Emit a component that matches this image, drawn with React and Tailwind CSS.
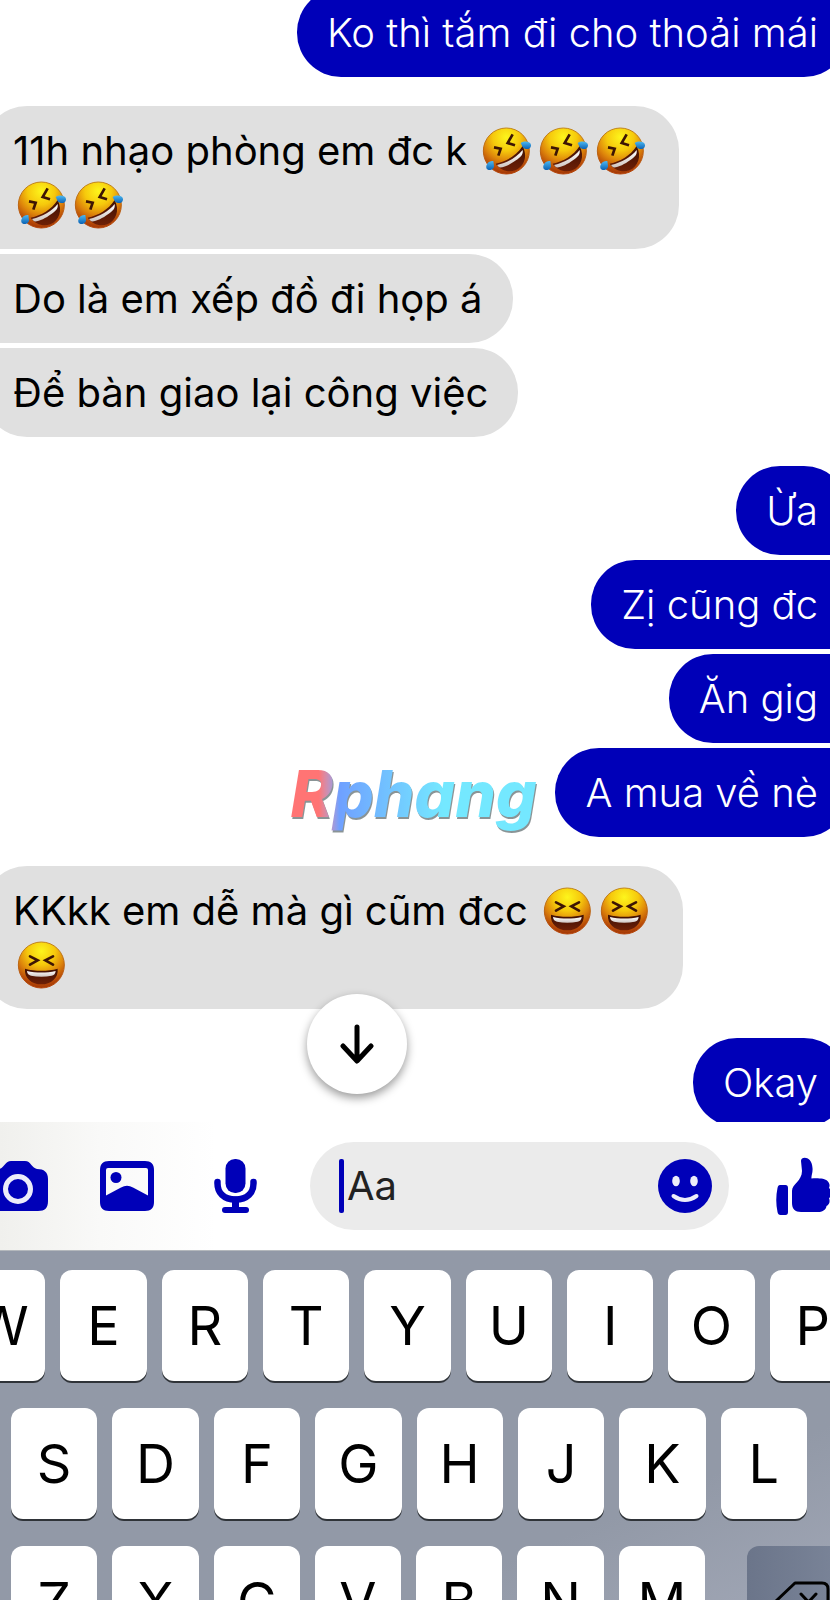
import { useState } from 'react'

const TOP_ROW = ['W', 'E', 'R', 'T', 'Y', 'U', 'I', 'O', 'P']
const HOME_ROW = ['S', 'D', 'F', 'G', 'H', 'J', 'K', 'L']
const BOTTOM_ROW = ['Z', 'X', 'C', 'V', 'B', 'N', 'M']

const ROFL = '🤣'
const LAUGH = '😆'

const THREAD = [
  { from: 'me', bubbles: [['Ko thì tắm đi cho thoải mái']] },
  {
    from: 'them',
    bubbles: [
      ['11h nhạo phòng em đc k ' + ROFL + ROFL + ROFL, ROFL + ROFL],
      ['Do là em xếp đồ đi họp á'],
      ['Để bàn giao lại công việc'],
    ],
  },
  { from: 'me', bubbles: [['Ừa'], ['Zị cũng đc'], ['Ăn gig'], ['A mua về nè']] },
  { from: 'them', bubbles: [['KKkk em dễ mà gì cũm đcc ' + LAUGH + LAUGH, LAUGH]] },
  { from: 'me', bubbles: [['Okay']] },
]

// Gradients shared by every emoji on the page
function EmojiDefs() {
  return (
    <svg className="absolute w-0 h-0" aria-hidden="true">
      <defs>
        <radialGradient id="face" cx="0.5" cy="0.2" r="0.82">
          <stop offset="0" stopColor="#fdf51c" />
          <stop offset="0.36" stopColor="#f6c90c" />
          <stop offset="0.62" stopColor="#de860b" />
          <stop offset="0.85" stopColor="#b84a08" />
          <stop offset="1" stopColor="#9c3206" />
        </radialGradient>
        <linearGradient id="rim" x1="0" y1="0" x2="0" y2="1">
          <stop offset="0" stopColor="#c1851a" />
          <stop offset="1" stopColor="#b5440a" />
        </linearGradient>
        <linearGradient id="mouth" x1="0" y1="0" x2="0" y2="1">
          <stop offset="0" stopColor="#3d0f04" />
          <stop offset="1" stopColor="#6e2006" />
        </linearGradient>
        <linearGradient id="teeth" x1="0" y1="0" x2="0" y2="1">
          <stop offset="0" stopColor="#ffffff" />
          <stop offset="1" stopColor="#cfc6c2" />
        </linearGradient>
        <linearGradient id="tear" x1="0" y1="0" x2="0" y2="1">
          <stop offset="0" stopColor="#4db9f2" />
          <stop offset="1" stopColor="#0b62b4" />
        </linearGradient>
      </defs>
    </svg>
  )
}

function RoflEmoji() {
  return (
    <svg viewBox="12 16 147 150" role="img" aria-label="rolling on the floor laughing" className="inline-block w-[49px] h-[50px] mx-1 -mt-1.5">
      <circle cx="85" cy="91" r="69" fill="url(#face)" stroke="url(#rim)" strokeWidth="3" />
      <path d="M48 80 L68 84 L61 105" fill="none" stroke="#3d1504" strokeWidth="8" strokeLinejoin="miter" />
      <path d="M104 41 L89 67 L111 74" fill="none" stroke="#3d1504" strokeWidth="8" strokeLinejoin="miter" />
      <path d="M53 129 C86 122 114 106 134 76 C150 108 138 138 112 149 C90 157 66 148 53 129 Z" fill="url(#mouth)" />
      <path d="M57 133 C90 125 116 110 134 88 C136 101 130 108 114 119 C98 131 76 142 63 140 Z" fill="url(#teeth)" />
      <path d="M128 67 C142 58 160 63 159 75 C158 88 140 88 134 79 Z" fill="url(#tear)" />
      <path d="M46 121 C31 119 21 134 26 144 C32 152 49 147 48 135 Z" fill="url(#tear)" />
    </svg>
  )
}

function LaughEmoji() {
  return (
    <svg viewBox="27 16 147 150" role="img" aria-label="laughing" className="inline-block w-[49px] h-[50px] mx-1 -mt-1.5">
      <circle cx="100" cy="91" r="69" fill="url(#face)" stroke="url(#rim)" strokeWidth="3" />
      <path d="M66 65 L89 77 L66 90" fill="none" stroke="#3d1504" strokeWidth="8" strokeLinecap="round" />
      <path d="M135 65 L112 77 L135 90" fill="none" stroke="#3d1504" strokeWidth="8" strokeLinecap="round" />
      <path d="M51 102 C80 110 120 110 149 102 C152 130 129 149 100 149 C71 149 48 130 51 102 Z" fill="url(#mouth)" />
      <path d="M57 109 C84 115 116 115 143 109 C142 119 137 122 131 123 C112 127 88 127 69 123 C62 121 58 118 57 109 Z" fill="url(#teeth)" />
    </svg>
  )
}

function Line({ text }) {
  return Array.from(text).map((ch, i) => {
    if (ch === ROFL) return <RoflEmoji key={i} />
    if (ch === LAUGH) return <LaughEmoji key={i} />
    return ch
  })
}

function Bubble({ lines, mine, first, last }) {
  const side = mine
    ? `self-end rounded-l-[44px] bg-[#0000b8] text-white font-[350] ${first ? 'rounded-tr-[44px]' : ''} ${last ? 'rounded-br-[44px]' : ''}`
    : `self-start rounded-r-[44px] bg-[#e0e0e0] text-black ${first ? 'rounded-tl-[44px]' : ''} ${last ? 'rounded-bl-[44px]' : ''}`

  return (
    <div className={`px-[30px] pt-[18px] pb-[17px] text-[40px] leading-[54px] whitespace-nowrap ${side}`}>
      {lines.map((line, i) => (
        <p key={i}>
          <Line text={line} />
        </p>
      ))}
    </div>
  )
}

function Watermark() {
  return (
    <div className="absolute left-[35%] top-[756px] drop-shadow-[1px_2px_0px_#8a9496] select-none">
      <span className="block pr-2 text-[64px] leading-[76px] font-extrabold italic text-transparent bg-clip-text bg-linear-to-r from-[#ff7474] from-11% via-[#6fa0ff] via-19% to-[#74e8ff] to-60%">
        Rphang
      </span>
    </div>
  )
}

function ArrowDownIcon() {
  return (
    <svg viewBox="0 0 34 40" className="w-[34px] h-[40px]" fill="none" stroke="currentColor" strokeWidth="5" strokeLinecap="round" strokeLinejoin="round">
      <path d="M17 3 V36 M3 22 L17 37 L31 22" />
    </svg>
  )
}

function CameraIcon() {
  return (
    <svg viewBox="0 0 60 50" className="w-[60px] h-[50px]" fill="currentColor">
      <path d="M23 0 H37 C43 0 43.500 7 49 8 C56 8 60 11 60 18 V40 C60 47 57 50 50 50 H10 C3 50 0 47 0 40 V18 C0 11 4 8 11 8 C16.500 7 17 0 23 0 Z" />
      <circle cx="30" cy="28" r="12.500" fill="none" stroke="#ececfa" strokeWidth="5" />
    </svg>
  )
}

function PhotoIcon() {
  return (
    <svg viewBox="0 0 54 50" className="w-[54px] h-[50px]" fill="currentColor">
      <path fillRule="evenodd" d="M9 0 H45 C51 0 54 3 54 9 V41 C54 47 51 50 45 50 H9 C3 50 0 47 0 41 V9 C0 3 3 0 9 0 Z M8 7 Q6 7 6 9 V34.500 L21 26.500 Q27 23 33 26.500 L48 34.500 V9 Q48 7 46 7 Z" />
      <circle cx="16" cy="16.500" r="5.500" />
    </svg>
  )
}

function MicIcon() {
  return (
    <svg viewBox="0 0 43 54" className="w-[43px] h-[54px]" fill="none" stroke="currentColor" strokeLinecap="round">
      <rect x="11.500" y="0" width="20" height="34" rx="9.500" fill="currentColor" stroke="none" />
      <path d="M3.500 23 C3 34 10 40.500 21.500 40.500 C33 40.500 40 34 39.500 23" strokeWidth="6.500" />
      <path d="M21.500 41 V50" strokeWidth="7" />
      <path d="M11 51 H32" strokeWidth="6" />
    </svg>
  )
}

function SmileIcon() {
  return (
    <svg viewBox="0 0 54 54" className="w-[54px] h-[54px]">
      <circle cx="27" cy="27" r="27" fill="currentColor" />
      <ellipse cx="18" cy="22" rx="3.800" ry="5.200" fill="#ececfa" />
      <ellipse cx="36" cy="22" rx="3.800" ry="5.200" fill="#ececfa" />
      <path d="M15.500 37 Q27 45 38.500 37" fill="none" stroke="#ececfa" strokeWidth="4" strokeLinecap="round" />
    </svg>
  )
}

function ThumbIcon() {
  return (
    <svg viewBox="0 0 60 58" className="w-[60px] h-[58px]" fill="currentColor">
      <path d="M4 28 H9.500 Q12 28 12 31 V55 Q12 58 9.500 58 H4.500 Q2 58 1.500 55 Q-1 43 1.500 31 Q2 28 4 28 Z" />
      <path d="M25 4 C25 -1 36 -1 36.500 11 C37 16 35 19 35.500 21.500 C42 21 49 21.500 51.500 24 C54.500 27 53.500 30 53 31 C57 34 56 39 53 41 C54.500 45 53 48 50.500 49 C50 53 46 55 42 55 H25 C19 55 16 52 16 46 V34 C16 27 26 24 26 14 Z" />
    </svg>
  )
}

function Composer() {
  const [text, setText] = useState('')

  return (
    <div className="flex items-center shrink-0 h-32 bg-linear-to-r from-[#f0f0ed] via-[#f9f9f8] via-12% to-white to-26% text-[#0000b8]">
      <button aria-label="Camera" className="-ml-3 shrink-0">
        <CameraIcon />
      </button>
      <button aria-label="Photo" className="ml-[52px] shrink-0">
        <PhotoIcon />
      </button>
      <button aria-label="Voice message" className="ml-[60px] shrink-0">
        <MicIcon />
      </button>
      <div className="flex items-center flex-1 min-w-0 h-[88px] ml-[53px] pl-[29px] pr-[17px] rounded-full bg-[#ebebeb]">
        <span className="w-[5px] h-[54px] shrink-0 rounded-xs bg-[#0000b8]" />
        <input
          value={text}
          onChange={e => setText(e.target.value)}
          placeholder="Aa"
          aria-label="Message"
          className="flex-1 min-w-0 pl-[3px] text-[40px] leading-[54px] text-[#222222] placeholder-[#222222] bg-transparent outline-none"
        />
        <button aria-label="Emoji" className="shrink-0">
          <SmileIcon />
        </button>
      </div>
      <button aria-label="Like" className="ml-[47px] -mr-[6px] shrink-0">
        <ThumbIcon />
      </button>
    </div>
  )
}

function Key({ label }) {
  return (
    <button className="flex-1 min-w-0 h-[111px] rounded-xl bg-white text-[54px] leading-none text-black shadow-[0_2px_0_#2f3338]">
      {label}
    </button>
  )
}

function Keyboard() {
  return (
    <div className="flex flex-col gap-[27px] shrink-0 h-[350px] pt-[19px] overflow-hidden border-t border-[#b4b8bc] bg-linear-to-br from-[#9299a7] from-75% to-[#a0a6b5]">
      <div className="flex gap-[15px] -ml-[41px] -mr-[26px]">
        {TOP_ROW.map(k => <Key key={k} label={k} />)}
      </div>
      <div className="flex gap-[15px] ml-[11px] mr-[23px]">
        {HOME_ROW.map(k => <Key key={k} label={k} />)}
      </div>
      <div className="flex gap-[42px] ml-[11px] -mr-[27px]">
        <div className="flex flex-1 gap-[15px]">
          {BOTTOM_ROW.map(k => <Key key={k} label={k} />)}
        </div>
        <button
          aria-label="Backspace"
          className="flex items-center justify-center w-[110px] h-[111px] shrink-0 rounded-xl bg-linear-to-r from-[#6b758a] to-[#7d879b] text-black"
        >
          <svg viewBox="0 0 56 42" className="w-[56px] h-[42px]" fill="none" stroke="currentColor" strokeWidth="3" strokeLinecap="round" strokeLinejoin="round">
            <path d="M21 2 H48 Q54 2 54 8 V34 Q54 40 48 40 H21 L2 22 Q1 21 2 20 Z" />
            <path d="M27 13 L42 29 M42 13 L27 29" />
          </svg>
        </button>
      </div>
    </div>
  )
}

export default function App() {
  return (
    <div className="flex flex-col h-screen overflow-hidden bg-white font-['Inter','Noto_Sans',sans-serif]">
      <EmojiDefs />

      {/* Thread */}
      <div className="relative flex-1 min-h-0 overflow-hidden">
        <div className="flex flex-col gap-[29px] -mt-3 -ml-[17px] -mr-[18px]">
          {THREAD.map((group, g) => (
            <div key={g} className="flex flex-col gap-[5px]">
              {group.bubbles.map((lines, i) => (
                <Bubble
                  key={i}
                  lines={lines}
                  mine={group.from === 'me'}
                  first={i === 0}
                  last={i === group.bubbles.length - 1}
                />
              ))}
            </div>
          ))}
        </div>

        <Watermark />

        <button
          aria-label="Scroll to latest"
          className="absolute left-[37%] bottom-[28px] flex items-center justify-center w-[100px] h-[100px] rounded-full bg-white text-black shadow-[0_4px_10px_rgba(0,0,0,0.4)]"
        >
          <ArrowDownIcon />
        </button>
      </div>

      <Composer />
      <Keyboard />
    </div>
  )
}
